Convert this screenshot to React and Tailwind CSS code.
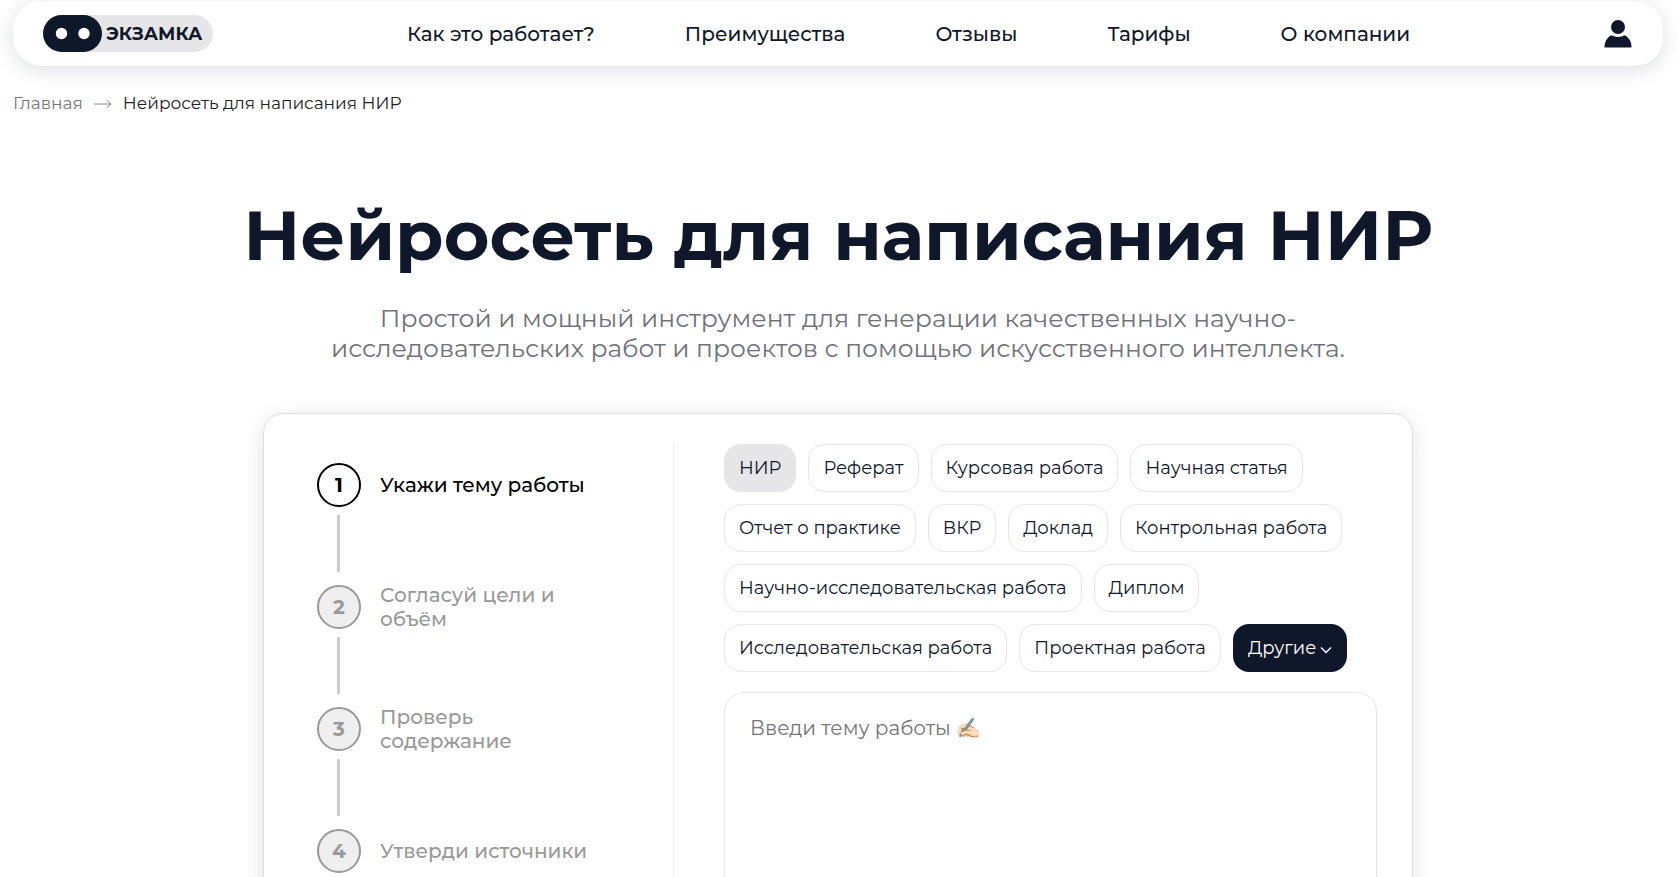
import React, { useState } from 'react';
import clsx from 'clsx';

const NAV_LINKS = ['Как это работает?', 'Преимущества', 'Отзывы', 'Тарифы', 'О компании'];

const STEPS = ['Укажи тему работы', 'Согласуй цели и объём', 'Проверь содержание', 'Утверди источники'];

const WORK_TYPES = [
  'НИР',
  'Реферат',
  'Курсовая работа',
  'Научная статья',
  'Отчет о практике',
  'ВКР',
  'Доклад',
  'Контрольная работа',
  'Научно-исследовательская работа',
  'Диплом',
  'Исследовательская работа',
  'Проектная работа',
];

function Logo() {
  return (
    <a href="#" className="flex h-[37px] w-[170px] items-center rounded-full bg-[#e6e6e8]">
      <svg viewBox="0 0 59 37" className="h-[37px] w-[59px] shrink-0" aria-hidden="true">
        <rect width="59" height="37" rx="18.5" fill="#0f172a" />
        <circle cx="18.5" cy="18.5" r="5.7" fill="#fff" />
        <circle cx="41" cy="18.5" r="5.7" fill="#fff" />
      </svg>
      <span className="ml-1 text-lg font-bold">ЭКЗАМКА</span>
    </a>
  );
}

function Header() {
  return (
    <header className="mt-px flex h-[65px] items-center justify-between rounded-[28px] bg-white pr-[31px] pl-[30px] shadow-[0_4px_20px_rgba(15,23,42,0.14)]">
      <Logo />
      <nav className="flex gap-[90px] text-xl font-medium">
        {NAV_LINKS.map((label) => (
          <a key={label} href="#" className="whitespace-nowrap">{label}</a>
        ))}
      </nav>
      <button type="button" aria-label="Профиль">
        <svg viewBox="0 0 28 28" className="size-7" fill="#0f172a" aria-hidden="true">
          <circle cx="14" cy="7" r="7" />
          <path d="M7 15.2 Q14 18.6 21 15.2 Q27.5 18.8 27.5 27.5 H0.5 Q0.5 18.8 7 15.2Z" />
        </svg>
      </button>
    </header>
  );
}

function Breadcrumbs() {
  return (
    <nav className="mt-[26px] flex h-6 items-center text-[17px]">
      <a href="#" className="text-[#777]">Главная</a>
      <svg viewBox="0 0 18 10" className="mx-[11px] h-[10px] w-[18px]" fill="none" stroke="#888" aria-hidden="true">
        <path d="M0 5 H17 M13 1.5 L17 5 L13 8.5" />
      </svg>
      <span className="text-[#222]">Нейросеть для написания НИР</span>
    </nav>
  );
}

function StepList({ current }) {
  return (
    <ol className="w-[410px] shrink-0 border-r border-[#ededed] pt-[17px] pl-[53px]">
      {STEPS.map((label, index) => {
        const active = index === current;
        return (
          <li key={label}>
            <div className="flex h-12 items-center gap-[19px]">
              <span
                className={clsx(
                  'flex size-11 shrink-0 items-center justify-center rounded-full border-2 text-xl font-bold',
                  active ? 'border-black bg-white text-black' : 'border-[#999] bg-[#efefef] text-[#999]'
                )}
              >
                {index + 1}
              </span>
              <span className={clsx('w-[215px] text-xl leading-6 font-medium', active ? 'text-black' : 'text-[#999]')}>
                {label}
              </span>
            </div>
            {index < STEPS.length - 1 && <div className="mt-[6px] mb-[11px] ml-5 h-[57px] w-[3px] bg-[#ccc]" />}
          </li>
        );
      })}
    </ol>
  );
}

function WorkTypes({ selected, onSelect }) {
  return (
    <div className="flex flex-wrap gap-3 pr-5 text-lg">
      {WORK_TYPES.map((type) => (
        <button
          key={type}
          type="button"
          onClick={() => onSelect(type)}
          className={clsx(
            'h-12 rounded-2xl border border-[#e6e6e8] px-[14px] whitespace-nowrap',
            type === selected ? 'bg-[#e6e6e8]' : 'bg-white'
          )}
        >
          {type}
        </button>
      ))}
      <button type="button" className="flex h-12 items-center gap-1 rounded-2xl bg-[#0f172a] px-[15px] text-white">
        Другие
        <svg viewBox="0 0 12 8" className="mt-1 h-2 w-3" fill="none" stroke="#fff" strokeWidth="1.4" aria-hidden="true">
          <path d="M1 1.5 L6 6.5 L11 1.5" />
        </svg>
      </button>
    </div>
  );
}

export default function App() {
  const [selected, setSelected] = useState('НИР');
  const [topic, setTopic] = useState('');

  return (
    <div className="flow-root min-h-screen bg-white pr-4 pb-10 pl-[13px] font-['Montserrat','Inter','Open_Sans',sans-serif] text-[#0f172a]">
      <Header />
      <Breadcrumbs />

      <main className="mt-[77px]">
        <h1 className="text-center text-[70px] leading-[84px] font-bold">Нейросеть для написания НИР</h1>
        <p className="mx-auto mt-[26px] max-w-[1060px] text-center text-[25px] leading-[30px] text-[#71717a]">
          Простой и мощный инструмент для генерации качественных научно-исследовательских работ и проектов с помощью искусственного интеллекта.
        </p>

        {/* Order form */}
        <section className="mx-auto mt-[50px] flex max-w-[1150px] rounded-[20px] border border-[#dedede] py-[30px] pr-[35px] shadow-[0_4px_20px_rgba(0,0,0,0.12)]">
          <StepList current={0} />
          <div className="min-w-0 flex-1 pl-[50px]">
            <WorkTypes selected={selected} onSelect={setSelected} />
            <textarea
              aria-label="Тема работы"
              placeholder="Введи тему работы ✍🏻"
              value={topic}
              onChange={(e) => setTopic(e.target.value)}
              className="mt-5 block h-[260px] w-full resize-none rounded-[20px] border border-[#e6e6e8] px-[25px] py-[21px] text-xl leading-7 placeholder:text-[#757575]"
            />
          </div>
        </section>
      </main>
    </div>
  );
}
